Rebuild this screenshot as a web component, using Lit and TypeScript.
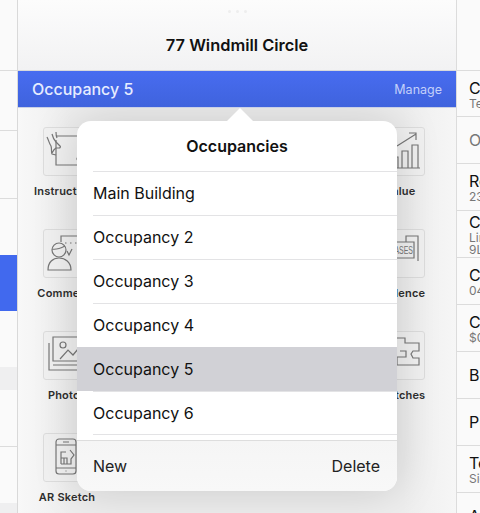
import { LitElement, html, css, svg } from "lit";
import { customElement } from "lit/decorators.js";

const sideRows = [
  { h: 71, c: "" }, { h: 60, c: "" }, { h: 68, c: "" }, { h: 56, c: "plain" },
  { h: 56, c: "blue" }, { h: 56, c: "plain" }, { h: 23, c: "grey" }, { h: 57, c: "" },
  { h: 56, c: "plain" }, { h: 10, c: "grey" },
];

const rightRows = [
  { t: "Client", s: ["Test"] },
  { t: "Other", s: [], muted: true },
  { t: "Report", s: ["23"] },
  { t: "Contact", s: ["Line", "9L"] },
  { t: "Claim", s: ["04"] },
  { t: "Cost", s: ["$0"] },
  { t: "Benefit", s: [] },
  { t: "Property", s: [] },
  { t: "Term", s: ["Sign"] },
  { t: "Assign", s: [] },
];

const icons = {
  instructions: svg`<path d="M13 13V38H41M13 9H41"/><path d="M4 10c2 4 2 6 4 9 1 3 0 6 1 8l4 1M9 7c1 4 2 6 4 8l4 4c1 1 0 2-1 2h-3c-2 1-3 3-4 5M13 5c0 3 0 4 1 6"/><path d="M36 36l-2-4c0-1 1-2 2-2l5 1"/>`,
  comments: svg`<circle cx="16" cy="21" r="7"/><path d="M9 20c4 1 9-1 13-3M5 41c0-8 5-12 11-12s12 4 12 12z"/><path d="M18 13V7H44M24 22l2 4 3-6"/><path stroke-dasharray="1.5 3.5" d="M22 14H42"/>`,
  photos: svg`<path d="M10 6H44V30H10zM6 12V39H44V34H10"/><circle cx="20" cy="14" r="3"/><path d="M17 28l8-9 5 5 5-6 6 7"/>`,
  ar: svg`<rect x="13" y="6" width="20" height="35" rx="3"/><path d="M13 12H33M13 35H33M20 9H26M22.5 38H23.5M18 31V19H23M18 31H28V26L31 22 27 17M18 25H24V31M21 25V31"/>`,
  value: svg`<path d="M21 19L40 7M33 6H40V13M12 41H44"/><path d="M16 41V30H22V41M26 41V24H32V41M36 41V18H42V41"/>`,
  evidence: svg`<path d="M30 13V7H42V32M4 13H38V29H4"/><text x="10" y="25" font-size="10" stroke="none" fill="#777" font-family="Liberation Sans Narrow, Liberation Sans, sans-serif" textLength="27" lengthAdjust="spacingAndGlyphs">LEASES</text>`,
  sketches: svg`<path d="M16 7H29V12H43V20H37l-2 3 2 4H43V34H21V26H30V20H24"/>`,
};

const tiles: [keyof typeof icons, string][] = [
  ["instructions", "Instructions"], ["value", "Value"],
  ["comments", "Comments"], ["evidence", "Evidence"],
  ["photos", "Photos"], ["sketches", "Sketches"],
  ["ar", "AR Sketch"],
];

const occupancies = ["Main Building", "Occupancy 2", "Occupancy 3", "Occupancy 4", "Occupancy 5", "Occupancy 6"];

@customElement("app-root")
export class AppRoot extends LitElement {
  static styles = css`
    :host {
      display: flex;
      position: relative;
      width: 480px;
      height: 513px;
      overflow: hidden;
      font-family: Inter, "Liberation Sans", sans-serif;
      color: #111;
      background: #fafafa;
    }
    .side {
      width: 17px;
      flex: none;
      border-right: 1px solid #d9d9d9;
      background: #fafafa;
    }
    .side div { border-bottom: 1px solid #dcdcdc; box-sizing: border-box; }
    .side .plain { border-bottom: none; }
    .side .blue { background: #4169ee; border-bottom: none; }
    .side .grey { background: #efeff0; border-bottom: none; }
    .main {
      width: 438px;
      flex: none;
      display: flex;
      flex-direction: column;
      background: #f6f6f6;
    }
    .head {
      height: 71px;
      box-sizing: border-box;
      flex: none;
      display: flex;
      flex-direction: column;
      align-items: center;
      background: linear-gradient(#fcfcfc, #f2f2f3);
      border-bottom: 1px solid #d9d9db;
    }
    .grab { margin-top: 10px; display: flex; gap: 5px; }
    .grab i { width: 3px; height: 3px; border-radius: 50%; background: #eeeeee; }
    .title { margin-top: 22px; font-size: 16.4px; font-weight: 600; }
    .bar {
      height: 37px;
      flex: none;
      box-sizing: border-box;
      padding: 0 14px;
      display: flex;
      align-items: center;
      justify-content: space-between;
      background: linear-gradient(#486cf0, #3f63dd);
      border-bottom: 1px solid #c9d0e6;
      color: #e6ecff;
      font-size: 16px;
      font-weight: 500;
      position: relative;
      z-index: 2;
    }
    .manage { font-size: 12.5px; font-weight: 400; color: #c3d0fa; }
    .grid {
      flex: 1;
      padding: 19px 7px 0 0;
      display: grid;
      grid-template-columns: 98px 98px;
      justify-content: space-between;
      grid-auto-rows: 102px;
      background: linear-gradient(90deg, #f8f8f8, #eeeeee 12%, #eeeeee 88%, #f6f6f6);
    }
    .cell { display: flex; flex-direction: column; align-items: center; }
    .tile {
      width: 47px;
      height: 47px;
      border: 1px solid #dddddd;
      border-radius: 3px;
      background: #f1f1f1;
      flex: none;
    }
    .tile svg { display: block; width: 48px; height: 48px; margin: -1px; fill: none; stroke: #777; stroke-width: 1.2; }
    .label {
      margin-top: 8px;
      font-size: 11px;
      font-weight: 600;
      letter-spacing: 0.2px;
      white-space: nowrap;
      color: #2e2e2e;
    }
    .right {
      flex: 1;
      min-width: 0;
      border-left: 1px solid #dcdcdc;
      background: #fafafa;
      padding-top: 70px;
      overflow: hidden;
    }
    .rrow {
      height: 47px;
      box-sizing: border-box;
      padding-left: 12px;
      display: flex;
      flex-direction: column;
      justify-content: center;
      border-bottom: 1px solid #dcdcdc;
      white-space: nowrap;
      overflow: hidden;
      font-size: 16px;
    }
    .rrow:first-child { border-top: 1px solid #dcdcdc; }
    .rrow.muted { color: #777; }
    .rrow small { font-size: 12px; color: #777; line-height: 12px; }
    .pop {
      position: absolute;
      left: 77px;
      top: 121px;
      width: 320px;
      height: 370px;
      border-radius: 14px;
      background: #fff;
      box-shadow: 0 0 45px rgba(0, 0, 0, 0.16);
      display: flex;
      flex-direction: column;
    }
    .arrow {
      position: absolute;
      left: 150px;
      top: -13px;
      width: 26px;
      height: 13px;
      background: #fff;
      clip-path: polygon(50% 0, 100% 100%, 0 100%);
    }
    .pop-title {
      height: 50px;
      flex: none;
      box-sizing: border-box;
      display: flex;
      align-items: center;
      justify-content: center;
      font-size: 16px;
      font-weight: 600;
    }
    .opts { flex: 1; }
    .opt {
      height: 44px;
      box-sizing: border-box;
      padding-left: 16px;
      display: flex;
      align-items: center;
      font-size: 16px;
      position: relative;
    }
    .opt::before {
      content: "";
      position: absolute;
      left: 16px;
      right: 0;
      top: 0;
      height: 1px;
      background: #e3e3e5;
    }
    .opt.sel { background: #d1d1d6; }
    .opt.sel::before { display: none; }
    .opt:last-child::after {
      content: "";
      position: absolute;
      left: 16px;
      right: 0;
      bottom: 0;
      height: 1px;
      background: #e3e3e5;
    }
    .foot {
      height: 51px;
      flex: none;
      box-sizing: border-box;
      border-top: 1px solid #dddddd;
      border-radius: 0 0 14px 14px;
      background: linear-gradient(#f5f5f5, #f8f8f8);
      padding: 0 17px 0 16px;
      display: flex;
      align-items: center;
      justify-content: space-between;
      font-size: 16px;
      color: #222;
    }
  `;

  render() {
    return html`
      <div class="side">
        ${sideRows.map((r) => html`<div class=${r.c} style="height:${r.h}px"></div>`)}
      </div>
      <div class="main">
        <div class="head">
          <div class="grab"><i></i><i></i><i></i></div>
          <div class="title">77 Windmill Circle</div>
        </div>
        <div class="bar"><span>Occupancy 5</span><span class="manage">Manage</span></div>
        <div class="grid">
          ${tiles.map(([icon, label]) => html`
            <div class="cell">
              <div class="tile"><svg viewBox="0 0 48 48">${icons[icon]}</svg></div>
              <div class="label">${label}</div>
            </div>`)}
        </div>
      </div>
      <div class="right">
        ${rightRows.map((r) => html`
          <div class="rrow ${r.muted ? "muted" : ""}">
            <span>${r.t}</span>
            ${r.s.map((s) => html`<small>${s}</small>`)}
          </div>`)}
      </div>
      <div class="pop">
        <div class="arrow"></div>
        <div class="pop-title">Occupancies</div>
        <div class="opts">
          ${occupancies.map((o) => html`<div class="opt ${o === "Occupancy 5" ? "sel" : ""}">${o}</div>`)}
        </div>
        <div class="foot"><span>New</span><span>Delete</span></div>
      </div>
    `;
  }
}
